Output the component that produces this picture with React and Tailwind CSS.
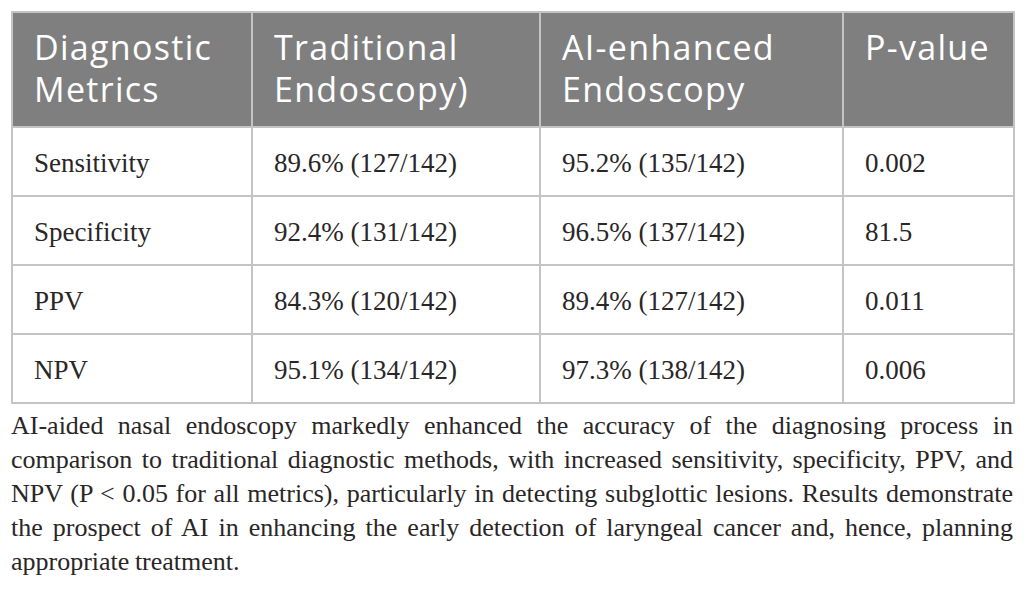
import React from "react";

const rows = [
  ["Sensitivity", "89.6% (127/142)", "95.2% (135/142)", "0.002"],
  ["Specificity", "92.4% (131/142)", "96.5% (137/142)", "81.5"],
  ["PPV", "84.3% (120/142)", "89.4% (127/142)", "0.011"],
  ["NPV", "95.1% (134/142)", "97.3% (138/142)", "0.006"],
];

const lines = [
  "AI-aided nasal endoscopy markedly enhanced the accuracy of the diagnosing process in",
  "comparison to traditional diagnostic methods, with increased sensitivity, specificity, PPV, and",
  "NPV (P < 0.05 for all metrics), particularly in detecting subglottic lesions. Results demonstrate",
  "the prospect of AI in enhancing the early detection of laryngeal cancer and, hence, planning",
];

export default function App() {
  return (
    <div className="w-[1026px] h-[598px] bg-white pt-[11px] px-[11px] overflow-hidden">
      <table className="w-[1002px] border-collapse table-fixed">
        <colgroup>
          <col className="w-[240px]" />
          <col className="w-[288px]" />
          <col className="w-[303px]" />
          <col className="w-[171px]" />
        </colgroup>
        <thead>
          <tr className="bg-[#7f7f7f] text-white font-['Open_Sans',sans-serif] text-[34px] leading-[42px] tracking-[1.3px]">
            {["Diagnostic|Metrics", "Traditional|Endoscopy)", "AI-enhanced|Endoscopy", "P-value"].map((h, i) => (
              <th
                key={i}
                className="h-[115px] border-2 border-[#c4c4c4] text-left font-normal align-top pl-[21px] pt-[13px]"
              >
                {h.split("|").map((l, k) => (
                  <div key={k}>{l}</div>
                ))}
              </th>
            ))}
          </tr>
        </thead>
        <tbody className="font-['Liberation_Serif',serif] text-[27px] text-[#2a2627]">
          {rows.map((r, i) => (
            <tr key={i} className="h-[69px]">
              {r.map((c, j) => (
                <td key={j} className="border-2 border-[#c4c4c4] pl-[21px] pt-[4px] align-middle">
                  {c}
                </td>
              ))}
            </tr>
          ))}
        </tbody>
      </table>
      <div className="mt-[5px] w-[1002px] font-['Liberation_Serif',serif] text-[26px] leading-[34px] text-[#2a2627] [word-spacing:-1px]">
        {lines.map((l, i) => (
          <div key={i} className="text-justify [text-align-last:justify]">
            {l}
          </div>
        ))}
        <div>appropriate treatment.</div>
      </div>
    </div>
  );
}
